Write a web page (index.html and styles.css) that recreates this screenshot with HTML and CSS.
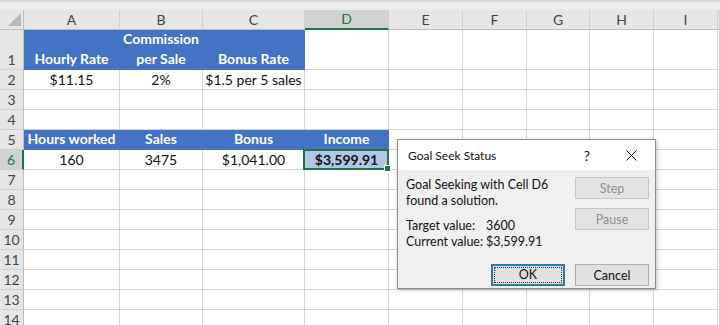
FILE: index.html
```html
<!DOCTYPE html>
<html lang="en">
<head>
    <meta charset="UTF-8">
    <title>Goal Seek Status</title>
    <link rel="stylesheet" href="styles.css">
</head>
<body>

<div class="ribbon-edge"></div>

<div class="sheet">
    <!-- column headers -->
    <div class="ch corner">
        <svg width="14" height="14" viewBox="0 0 14 14"><polygon points="13,0 13,13 0,13" fill="#b7b7b7"/></svg>
    </div>
    <div class="ch">A</div>
    <div class="ch">B</div>
    <div class="ch">C</div>
    <div class="ch active-col">D</div>
    <div class="ch">E</div>
    <div class="ch">F</div>
    <div class="ch">G</div>
    <div class="ch">H</div>
    <div class="ch">I</div>
    <div class="ch"></div>

    <!-- row 1 -->
    <div class="rh">1</div>
    <div class="c head">Hourly Rate</div>
    <div class="c head">Commission<br>per Sale</div>
    <div class="c head">Bonus Rate</div>
    <div class="c"></div><div class="c"></div><div class="c"></div><div class="c"></div><div class="c"></div><div class="c"></div><div class="c"></div>

    <!-- row 2 -->
    <div class="rh">2</div>
    <div class="c">$11.15</div>
    <div class="c">2%</div>
    <div class="c">$1.5 per 5 sales</div>
    <div class="c"></div><div class="c"></div><div class="c"></div><div class="c"></div><div class="c"></div><div class="c"></div><div class="c"></div>

    <!-- row 3 -->
    <div class="rh">3</div>
    <div class="c"></div><div class="c"></div><div class="c"></div><div class="c"></div><div class="c"></div><div class="c"></div><div class="c"></div><div class="c"></div><div class="c"></div><div class="c"></div>

    <!-- row 4 -->
    <div class="rh">4</div>
    <div class="c"></div><div class="c"></div><div class="c"></div><div class="c"></div><div class="c"></div><div class="c"></div><div class="c"></div><div class="c"></div><div class="c"></div><div class="c"></div>

    <!-- row 5 -->
    <div class="rh">5</div>
    <div class="c head">Hours worked</div>
    <div class="c head">Sales</div>
    <div class="c head">Bonus</div>
    <div class="c head">Income</div>
    <div class="c"></div><div class="c"></div><div class="c"></div><div class="c"></div><div class="c"></div><div class="c"></div>

    <!-- row 6 -->
    <div class="rh active-row">6</div>
    <div class="c">160</div>
    <div class="c">3475</div>
    <div class="c">$1,041.00</div>
    <div class="c selected">$3,599.91<span class="fill-handle"></span></div>
    <div class="c"></div><div class="c"></div><div class="c"></div><div class="c"></div><div class="c"></div><div class="c"></div>

    <!-- rows 7 - 14 -->
    <div class="rh">7</div>
    <div class="c"></div><div class="c"></div><div class="c"></div><div class="c"></div><div class="c"></div><div class="c"></div><div class="c"></div><div class="c"></div><div class="c"></div><div class="c"></div>
    <div class="rh">8</div>
    <div class="c"></div><div class="c"></div><div class="c"></div><div class="c"></div><div class="c"></div><div class="c"></div><div class="c"></div><div class="c"></div><div class="c"></div><div class="c"></div>
    <div class="rh">9</div>
    <div class="c"></div><div class="c"></div><div class="c"></div><div class="c"></div><div class="c"></div><div class="c"></div><div class="c"></div><div class="c"></div><div class="c"></div><div class="c"></div>
    <div class="rh">10</div>
    <div class="c"></div><div class="c"></div><div class="c"></div><div class="c"></div><div class="c"></div><div class="c"></div><div class="c"></div><div class="c"></div><div class="c"></div><div class="c"></div>
    <div class="rh">11</div>
    <div class="c"></div><div class="c"></div><div class="c"></div><div class="c"></div><div class="c"></div><div class="c"></div><div class="c"></div><div class="c"></div><div class="c"></div><div class="c"></div>
    <div class="rh">12</div>
    <div class="c"></div><div class="c"></div><div class="c"></div><div class="c"></div><div class="c"></div><div class="c"></div><div class="c"></div><div class="c"></div><div class="c"></div><div class="c"></div>
    <div class="rh">13</div>
    <div class="c"></div><div class="c"></div><div class="c"></div><div class="c"></div><div class="c"></div><div class="c"></div><div class="c"></div><div class="c"></div><div class="c"></div><div class="c"></div>
    <div class="rh">14</div>
    <div class="c"></div><div class="c"></div><div class="c"></div><div class="c"></div><div class="c"></div><div class="c"></div><div class="c"></div><div class="c"></div><div class="c"></div><div class="c"></div>
</div>

<!-- Goal Seek dialog -->
<div class="dialog">
    <div class="dialog-title">
        <span class="title-text">Goal Seek Status</span>
        <span class="title-help">?</span>
        <svg class="title-close" width="11" height="11" viewBox="0 0 11 11"><path d="M0.5 0.5 L10.5 10.5 M10.5 0.5 L0.5 10.5" stroke="#111" stroke-width="1"/></svg>
    </div>
    <div class="dialog-body">
        <div class="dialog-msg">
            <p>Goal Seeking with Cell D6<br>found a solution.</p>
            <div class="value-row"><span class="value-label">Target value:</span><span>3600</span></div>
            <div class="value-row"><span class="value-label">Current value:</span><span>$3,599.91</span></div>
        </div>
        <div class="side-buttons">
            <button class="btn" disabled>Step</button>
            <button class="btn" disabled>Pause</button>
        </div>
    </div>
    <div class="dialog-footer">
        <button class="btn btn-default"><span>OK</span></button>
        <button class="btn">Cancel</button>
    </div>
</div>

</body>
</html>
```

FILE: styles.css
```css
body {
    margin: 0;
    width: 720px;
    height: 325px;
    overflow: hidden;
    background-color: #fff;
    font-family: Lato, "Liberation Sans", sans-serif;
    position: relative;
}
.ribbon-edge {
    height: 10px;
    box-sizing: border-box;
    background-color: #ececec;
    border-top: 2px solid #d6d6d6;
}
.sheet {
    display: grid;
    grid-template-columns: 24px 96px 83px 102px 84px 74px 64px 63px 64px 64px 2px;
    grid-template-rows: 20px 40px;
    grid-auto-rows: 20px;
    font-size: 14px;
    color: #111;
}
.ch,
.rh,
.c {
    box-sizing: border-box;
    display: flex;
    justify-content: center;
    align-items: flex-end;
    padding-bottom: 1px;
    line-height: 17px;
    white-space: nowrap;
}
.ch {
    background-color: #e6e6e6;
    color: #444;
    border-right: 1px solid #d0d0d0;
    border-bottom: 1px solid #bdbdbd;
}
.corner {
    align-items: flex-end;
    justify-content: flex-end;
    padding: 0 1px 2px 0;
    border-right: 1px solid #bdbdbd;
}
.rh {
    background-color: #e6e6e6;
    color: #444;
    border-right: 1px solid #bdbdbd;
    border-bottom: 1px solid #d0d0d0;
}
.c {
    border-right: 1px solid #d4d4d4;
    border-bottom: 1px solid #d4d4d4;
    text-align: center;
}
.head {
    background-color: #4472c4;
    border-color: #4472c4;
    color: #fff;
    font-weight: bold;
    line-height: 20px;
    padding-bottom: 0;
}
.active-col {
    background-color: #d2d2d2;
    color: #217346;
    border-bottom: 2px solid #217346;
}
.active-row {
    background-color: #d2d2d2;
    color: #217346;
    border-right: 2px solid #217346;
}
.selected {
    position: relative;
    background-color: #b4c6e7;
    font-weight: bold;
}
.selected::after {
    content: "";
    position: absolute;
    top: -1px;
    left: -2px;
    right: -1px;
    bottom: -1px;
    border: 2px solid #217346;
}
.fill-handle {
    position: absolute;
    right: -3px;
    bottom: -3px;
    width: 5px;
    height: 5px;
    background-color: #217346;
    border: 1px solid #fff;
    z-index: 1;
}

/* dialog */
.dialog {
    position: absolute;
    left: 397px;
    top: 139px;
    width: 259px;
    height: 150px;
    box-sizing: border-box;
    border: 1px solid #8c8c8c;
    background-color: #f0f0f0;
    box-shadow: 1px 1px 4px rgba(0, 0, 0, 0.25);
    font-family: Lato, "Liberation Sans", sans-serif;
    font-size: 12.5px;
    color: #111;
}
.dialog-title {
    height: 30px;
    background-color: #fff;
    display: flex;
    align-items: center;
    padding-left: 10px;
    padding-right: 18px;
    font-size: 12px;
}
.title-text {
    flex: 1;
}
.title-help {
    font-size: 14px;
    margin-right: 36px;
}
.dialog-body {
    display: flex;
    justify-content: space-between;
    padding: 7px 6px 0 8px;
}
.dialog-msg p {
    margin: 0 0 9px;
    line-height: 16px;
}
.value-row {
    line-height: 16px;
    display: flex;
}
.value-label {
    width: 80px;
}
.side-buttons {
    display: flex;
    flex-direction: column;
    gap: 9px;
}
.btn {
    width: 74px;
    height: 22px;
    box-sizing: border-box;
    background-color: #e1e1e1;
    border: 1px solid #adadad;
    font-family: inherit;
    font-size: 12.5px;
    color: #111;
    padding: 0;
}
.btn:disabled {
    background-color: #e3e3e3;
    border-color: #c4c4c4;
    color: #8d8d8d;
}
.dialog-footer {
    display: flex;
    justify-content: flex-end;
    gap: 10px;
    padding: 14px 6px 0 0;
}
.btn-default {
    border: 2px solid #2a7ab8;
    padding: 1px;
}
.btn-default span {
    display: block;
    height: 100%;
    box-sizing: border-box;
    border: 1px dotted #333;
    line-height: 14px;
}
```
